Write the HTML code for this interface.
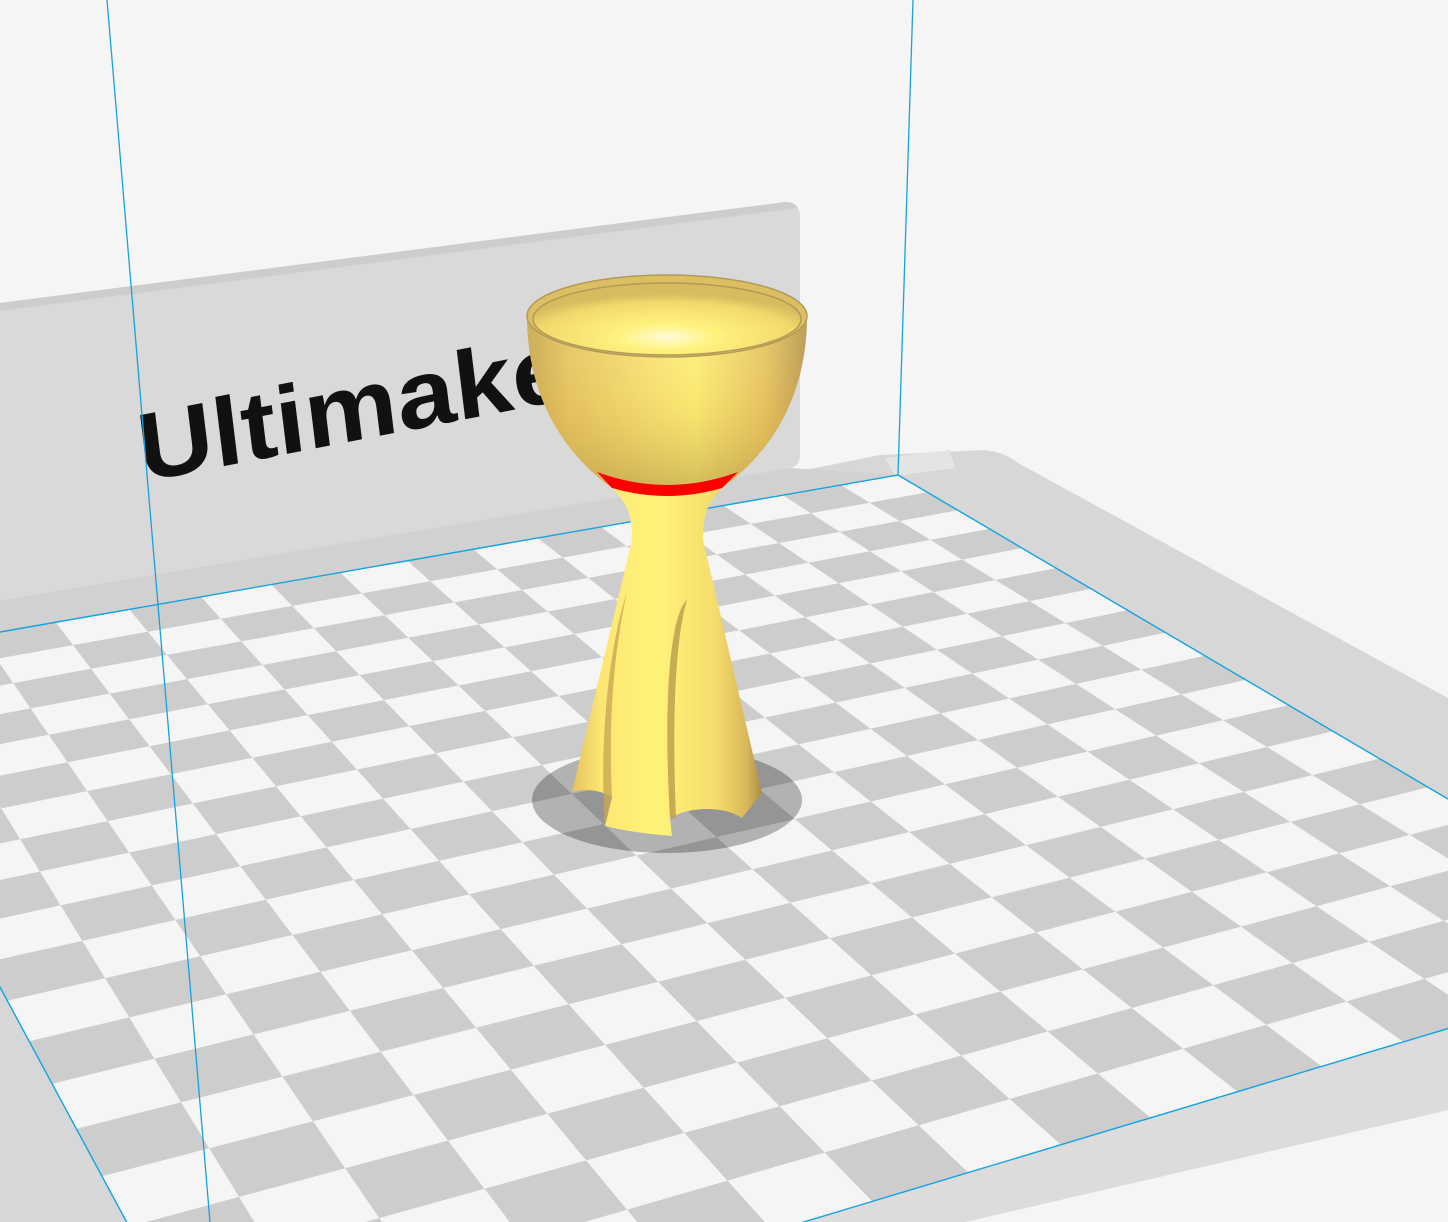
<!DOCTYPE html>
<html><head><meta charset="utf-8">
<style>
html,body{margin:0;padding:0;background:#f5f5f5;overflow:hidden;width:1448px;height:1222px}
svg{display:block}
</style></head>
<body>
<svg id="s" width="1448" height="1222" viewBox="0 0 1448 1222" xmlns="http://www.w3.org/2000/svg">
<defs>
<linearGradient id="bowl" x1="0" x2="1" y1="0" y2="0">
<stop offset="0" stop-color="#c9aa55"/>
<stop offset="0.15" stop-color="#e8c865"/>
<stop offset="0.45" stop-color="#fbe678"/>
<stop offset="0.6" stop-color="#fff27a"/>
<stop offset="0.85" stop-color="#e9c766"/>
<stop offset="1" stop-color="#b89b52"/>
</linearGradient>
<linearGradient id="bowlv" x1="0" x2="0" y1="0" y2="1">
<stop offset="0" stop-color="#ffffff" stop-opacity="0"/>
<stop offset="0.6" stop-color="#d8a840" stop-opacity="0.15"/>
<stop offset="1" stop-color="#9a7a30" stop-opacity="0.45"/>
</linearGradient>
<radialGradient id="inner" cx="0.5" cy="0.75" r="0.6">
<stop offset="0" stop-color="#fffbd6"/>
<stop offset="0.3" stop-color="#fff37e"/>
<stop offset="0.8" stop-color="#f3d86c"/>
<stop offset="1" stop-color="#d8bb5e"/>
</radialGradient>
<linearGradient id="stem" x1="0" x2="1" y1="0" y2="0">
<stop offset="0" stop-color="#e3c25e"/>
<stop offset="0.15" stop-color="#fde672"/>
<stop offset="0.45" stop-color="#fff47a"/>
<stop offset="0.75" stop-color="#f6dc6c"/>
<stop offset="0.92" stop-color="#d9b75a"/>
<stop offset="1" stop-color="#a88d48"/>
</linearGradient>
<clipPath id="plateclip"><polygon id="pq" points="0,0"/></clipPath>
</defs>

<rect width="1448" height="1222" fill="#f5f5f5"/>

<path d="M880,455 L983,450 Q1005,452 1018,463 L1448,698 L1448,1110 L965,1222 L0,1222 L0,632 Z" fill="#d7d7d7"/>
<path d="M1448,1030 L1448,1110 L965,1222 L800,1222 Z" fill="#dcdcdc"/>

<path d="M0,303 L785,202 Q800,202 800,217 L800,455 Q800,466 790,468 L0,600 Z" fill="#d9d9d9"/>
<path d="M0,303 L785,202 Q795,202 798,208 L0,311 Z" fill="#cdcdcd"/>
<path d="M0,600 L790,468 L898,475 L0,632 Z" fill="#d1d1d1"/>
<path d="M885,458 L950,450 L955,468 L895,476 Z" fill="#e4e4e4"/>

<text x="0" y="0" font-family="Liberation Sans, sans-serif" font-weight="bold" font-size="96" fill="#111" transform="translate(142,482) rotate(-11) skewX(-4)" textLength="480" lengthAdjust="spacingAndGlyphs">Ultimaker</text>

<g id="plate" clip-path="url(#plateclip)">
<rect width="1448" height="1222" fill="#f5f5f5"/>
<g id="cells" fill="#cdcdcd"></g>
</g>
<polygon id="pedge" fill="none" stroke="#14a3e0" stroke-width="1.4" points="0,0"/>

<line x1="107" y1="0" x2="210" y2="1222" stroke="#14a3e0" stroke-width="1.3"/>
<line x1="913" y1="0" x2="898" y2="475" stroke="#14a3e0" stroke-width="1.3"/>

<ellipse cx="667" cy="800" rx="135" ry="53" fill="#000" fill-opacity="0.27"/>

<path d="M612,488 C630,505 632,520 632,540 L572,792 C585,788 600,790 612,797 L605,826 C630,832 650,834 672,836 L670,818 C690,806 725,806 742,818 L762,793 L703,540 C703,520 705,505 722,488 Z" fill="url(#stem)"/>
<path d="M627,592 C614,650 608,720 612,797 L605,826 C600,760 605,660 627,592 Z" fill="#c9a852" opacity="0.8"/>
<path d="M670,818 C663,700 670,615 687,600 C675,640 672,720 676,818 Z" fill="#b99b4c" opacity="0.8"/>

<path d="M527,316 C527,395 562,452 612,488 L722,488 C772,452 807,395 807,316 A140,41 0 0 0 527,316 Z" fill="url(#bowl)"/>
<path d="M527,316 C527,395 562,452 612,488 L722,488 C772,452 807,395 807,316 A140,41 0 0 0 527,316 Z" fill="url(#bowlv)"/>
<ellipse cx="667" cy="316" rx="140" ry="41" fill="#dcbf62" stroke="#b29a58" stroke-width="1.5"/>
<ellipse cx="667" cy="319" rx="134" ry="36" fill="url(#inner)" stroke="#b29a58" stroke-width="1.5"/>
<path d="M597,472 Q667,498 738,472 L722,488 Q667,504 612,488 Z" fill="#ff0000"/>
</svg>
<script>
(function(){
var P=[[-175,662.6],[898,475],[1706,951],[221,1397]];
var x0=P[0][0],y0=P[0][1],x1=P[1][0],y1=P[1][1],x2=P[2][0],y2=P[2][1],x3=P[3][0],y3=P[3][1];
var dx1=x1-x2,dx2=x3-x2,dx3=x0-x1+x2-x3,dy1=y1-y2,dy2=y3-y2,dy3=y0-y1+y2-y3;
var den=dx1*dy2-dx2*dy1;
var g=(dx3*dy2-dx2*dy3)/den,h=(dx1*dy3-dx3*dy1)/den;
var a=x1-x0+g*x1,b=x3-x0+h*x3,c=x0,d=y1-y0+g*y1,e=y3-y0+h*y3,f=y0;
function m(u,v){var w=g*u+h*v+1;return ((a*u+b*v+c)/w).toFixed(1)+","+((d*u+e*v+f)/w).toFixed(1);}
var N=16,M=19,s="";
for(var i=0;i<N;i++)for(var j=0;j<M;j++){
 if((i+j)%2==0){
  var u0=i/N,u1=(i+1)/N,v0=j/M,v1=(j+1)/M;
  s+='<polygon points="'+m(u0,v0)+' '+m(u1,v0)+' '+m(u1,v1)+' '+m(u0,v1)+'"/>';
 }}
document.getElementById("cells").innerHTML=s;
var q=m(0,0)+" "+m(1,0)+" "+m(1,1)+" "+m(0,1);
document.getElementById("pq").setAttribute("points",q);
document.getElementById("pedge").setAttribute("points",q);
})();
</script>
</body></html>
